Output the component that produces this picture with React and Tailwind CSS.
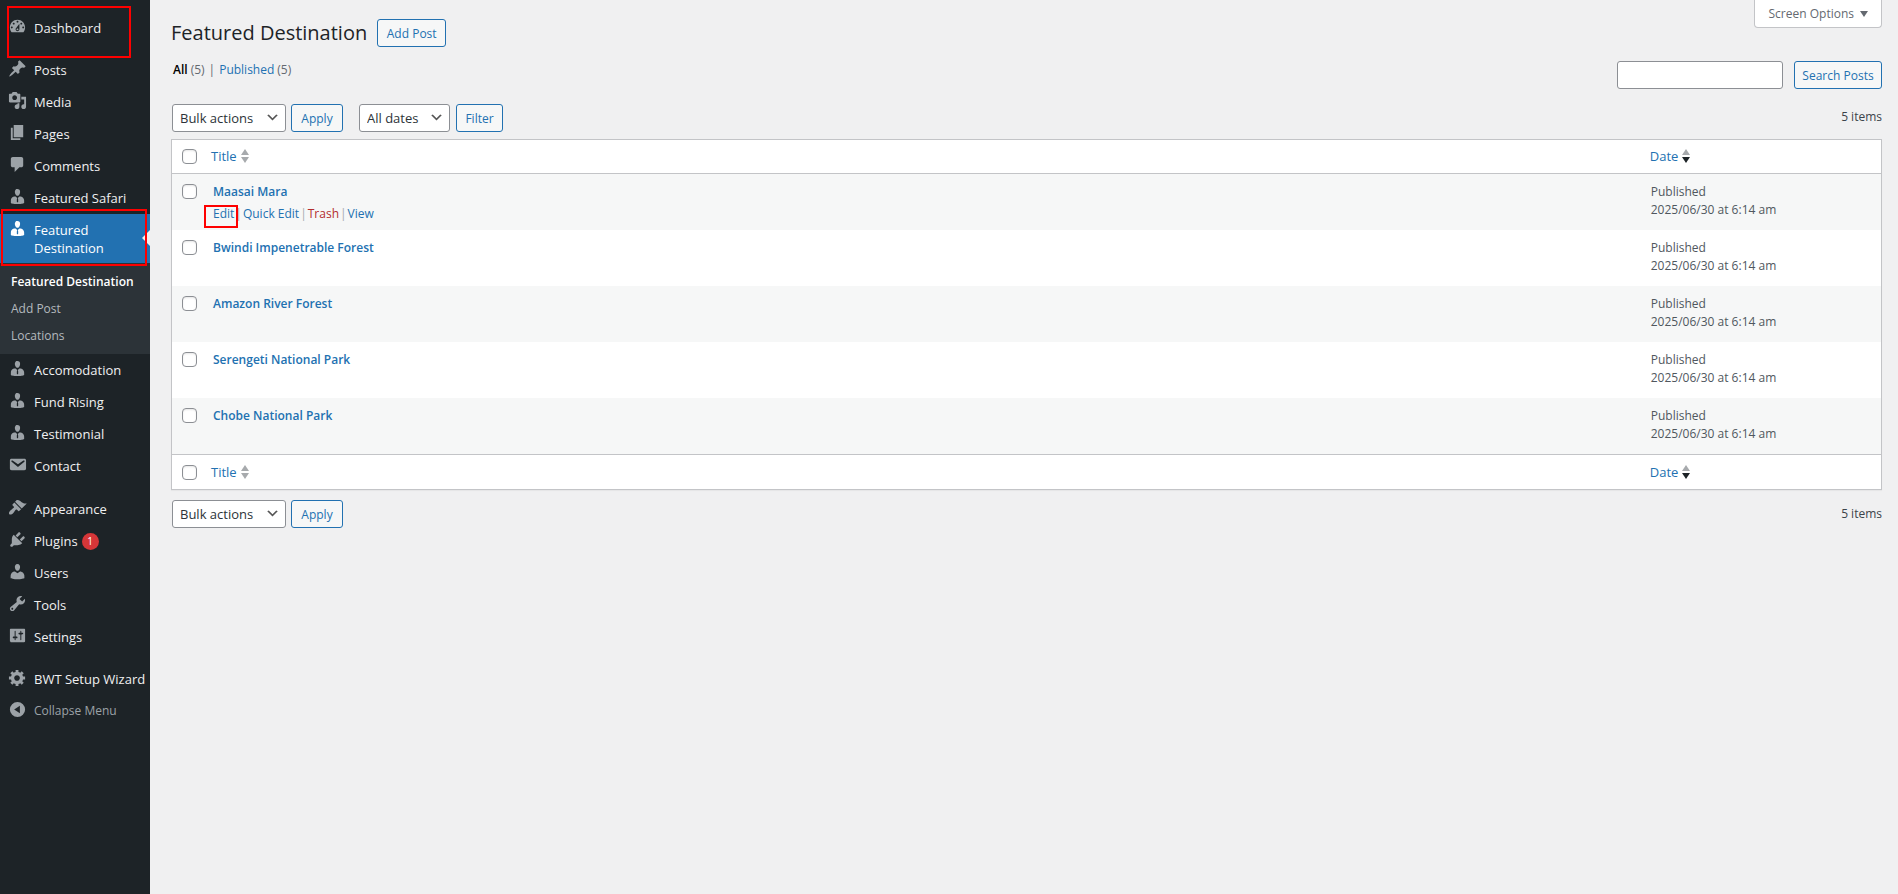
import React from "react";

const ICONS = {
  dashboard:
    "M3.76 16h12.48c1.1-1.37 1.76-3.11 1.76-5 0-4.42-3.58-8-8-8s-8 3.58-8 8c0 1.89.66 3.63 1.76 5zM10 4c.55 0 1 .45 1 1s-.45 1-1 1-1-.45-1-1 .45-1 1-1zM6 6c.55 0 1 .45 1 1s-.45 1-1 1-1-.45-1-1 .45-1 1-1zm8 0c.55 0 1 .45 1 1s-.45 1-1 1-1-.45-1-1 .45-1 1-1zm-5.37 5.55L12 7v6c0 1.1-.9 2-2 2s-2-.9-2-2c0-.57.24-1.08.63-1.45zM4 10c.55 0 1 .45 1 1s-.45 1-1 1-1-.45-1-1 .45-1 1-1zm12 0c.55 0 1 .45 1 1s-.45 1-1 1-1-.45-1-1 .45-1 1-1zm-5 3c0-.55-.45-1-1-1s-1 .45-1 1 .45 1 1 1 1-.45 1-1z",
  pin: "M10.44 3.02l1.82-1.82 6.36 6.35-1.83 1.82c-1.05-.68-2.48-.57-3.41.36l-.75.75c-.92.93-1.04 2.35-.35 3.41l-1.83 1.82-2.41-2.41-2.8 2.79c-.42.42-3.38 2.71-3.8 2.29s1.86-3.39 2.28-3.81l2.79-2.79L4.1 9.36l1.83-1.82c1.05.69 2.48.57 3.4-.36l.75-.75c.93-.92 1.05-2.35.36-3.41z",
  media:
    "M13 11V4c0-.55-.45-1-1-1h-1.67L9 1H5L3.67 3H2c-.55 0-1 .45-1 1v7c0 .55.45 1 1 1h10c.55 0 1-.45 1-1zM7 4.5c1.38 0 2.5 1.12 2.5 2.5S8.38 9.5 7 9.5 4.5 8.38 4.5 7 5.62 4.5 7 4.5zM14 6h5v10.5c0 1.38-1.12 2.5-2.5 2.5S14 17.88 14 16.5s1.12-2.5 2.5-2.5c.17 0 .34.02.5.05V9h-3V6zm-4 8.05V13h2v3.5c0 1.38-1.12 2.5-2.5 2.5S7 17.88 7 16.5 8.12 14 9.5 14c.17 0 .34.02.5.05z",
  pages: "M6 15V2h10v13H6zm-1 1h8v2H3V5h2v11z",
  comments:
    "M5 2h9c1.1 0 2 .9 2 2v7c0 1.1-.9 2-2 2h-2l-5 5v-5H5c-1.1 0-2-.9-2-2V4c0-1.1.9-2 2-2z",
  person:
    "M7.3 6l-.03-.19c-.04-.37-.05-.73-.03-1.08.02-.36.1-.71.25-1.04.14-.32.31-.61.52-.86s.49-.46.83-.6c.34-.15.72-.23 1.13-.23.69 0 1.26.2 1.71.59s.76.87.91 1.44.18 1.16.09 1.78l-.03.19c-.01.09-.05.25-.11.48-.05.24-.12.47-.2.69-.08.21-.19.45-.34.72-.14.27-.3.49-.47.69-.18.19-.4.34-.67.48-.27.13-.55.19-.86.19s-.59-.06-.87-.19c-.26-.13-.49-.29-.67-.5-.18-.2-.34-.42-.49-.66-.15-.25-.26-.49-.34-.73-.09-.25-.16-.47-.21-.67-.06-.21-.1-.37-.12-.5zm9.2 6.24c.41.7.5 1.41.5 2.14v2.49c0 .03-.12.08-.29.13-.18.04-.42.13-.97.27-.55.12-1.1.24-1.65.34s-1.19.19-1.95.27c-.75.08-1.46.12-2.13.12-.68 0-1.39-.04-2.14-.12-.75-.07-1.4-.17-1.98-.27-.58-.11-1.08-.23-1.56-.34-.49-.11-.8-.21-1.06-.29L3 16.87v-2.49c0-.75.07-1.46.46-2.15s.81-1.25 1.5-1.68C5.66 10.12 7.19 10 8 10l1.67 1.67L9.3 13.2v2.2l.72.9.68-.9v-2.2l-.38-1.53L11.97 10c.77 0 2.2.07 2.9.52.71.45 1.21 1.02 1.63 1.72z",
  email:
    "M3.87 4h13.25C18.37 4 19 4.59 19 5.79v8.42c0 1.19-.63 1.79-1.88 1.79H3.87c-1.25 0-1.88-.6-1.88-1.79V5.79c0-1.2.63-1.79 1.88-1.79zm6.62 8.6l6.74-5.53c.24-.2.43-.66.13-1.07-.29-.41-.82-.42-1.17-.17l-5.7 3.86L4.8 5.83c-.35-.25-.88-.24-1.17.17-.3.41-.11.87.13 1.07z",
  brush:
    "M14.48 11.06L7.41 3.99l1.5-1.5c.5-.56 2.3-.47 3.51.32 1.21.8 1.43 1.28 2.91 2.1 1.18.64 2.45 1.26 4.45.85zm-.71.71L6.7 4.7 4.93 6.47c-.39.39-.39 1.02 0 1.41l1.06 1.06c.39.39.39 1.03 0 1.42-.6.6-1.43 1.11-2.21 1.69-.35.26-.7.53-1.01.84C1.43 14.23.4 16.08 1.4 17.07c.99 1 2.84-.03 4.18-1.36.31-.31.58-.66.85-1.02.57-.78 1.08-1.61 1.69-2.21.39-.39 1.02-.39 1.41 0l1.06 1.06c.39.39 1.02.39 1.41 0z",
  plug: "M13.11 4.36L9.87 7.6 8 5.73l3.24-3.24c.35-.34 1.05-.2 1.56.32.52.51.66 1.21.31 1.55zm-8 1.77l.91-1.12 9.01 9.01-1.19.84c-.71.71-2.63 1.16-3.82 1.16H6.14L4.9 17.26c-.59.59-1.54.59-2.12 0-.59-.58-.59-1.53 0-2.12l1.24-1.24v-3.88c0-1.13.4-3.19 1.09-3.89zm7.26 3.97l3.24-3.24c.34-.35 1.04-.21 1.55.31.52.51.66 1.21.31 1.55l-3.24 3.25z",
  user: "M10 9.25c-2.27 0-2.73-3.44-2.73-3.44C7 4.02 7.82 2 9.97 2c2.16 0 2.98 2.02 2.71 3.81 0 0-.41 3.44-2.68 3.44zm0 2.57L12.72 10c2.39 0 4.52 2.33 4.52 4.53v2.49s-3.65 1.13-7.24 1.13c-3.65 0-7.24-1.13-7.24-1.13v-2.49c0-2.25 1.94-4.48 4.47-4.48z",
  wrench:
    "M16.68 9.77c-1.34 1.34-3.3 1.67-4.95.99l-5.41 6.52c-.99.99-2.59.99-3.58 0s-.99-2.59 0-3.57l6.52-5.42c-.68-1.65-.35-3.61.99-4.95 1.28-1.28 3.12-1.62 4.72-1.06l-2.89 2.89 2.82 2.82 2.86-2.87c.53 1.58.18 3.39-1.08 4.65zM3.81 16.21c.4.39 1.04.39 1.43 0 .4-.4.4-1.04 0-1.43-.39-.4-1.03-.4-1.43 0-.39.39-.39 1.03 0 1.43z",
  sliders:
    "M18 16V4c0-.55-.45-1-1-1H3c-.55 0-1 .45-1 1v12c0 .55.45 1 1 1h14c.55 0 1-.45 1-1zM8 11h1c.55 0 1 .45 1 1s-.45 1-1 1H8v1.5c0 .28-.22.5-.5.5s-.5-.22-.5-.5V13H6c-.55 0-1-.45-1-1s.45-1 1-1h1V5.5c0-.28.22-.5.5-.5s.5.22.5.5V11zm5-2h-1c-.55 0-1-.45-1-1s.45-1 1-1h1V5.5c0-.28.22-.5.5-.5s.5.22.5.5V7h1c.55 0 1 .45 1 1s-.45 1-1 1h-1v5.5c0 .28-.22.5-.5.5s-.5-.22-.5-.5V9z",
  gear: "M18 12h-2.18c-.17.7-.44 1.35-.81 1.93l1.54 1.54-2.1 2.1-1.54-1.54c-.58.36-1.23.63-1.91.79V19H8v-2.18c-.68-.16-1.33-.43-1.91-.79l-1.54 1.54-2.12-2.12 1.54-1.54c-.36-.58-.63-1.23-.79-1.91H1V9.03h2.17c.16-.7.44-1.35.8-1.94L2.43 5.55l2.1-2.1 1.54 1.54c.58-.37 1.24-.64 1.93-.81V2h3v2.18c.68.16 1.33.43 1.91.79l1.54-1.54 2.12 2.12-1.54 1.54c.36.59.64 1.24.8 1.94H18V12zm-8.5 1.5c1.66 0 3-1.34 3-3s-1.34-3-3-3-3 1.34-3 3 1.34 3 3 3z",
  collapse: "M10 2a8 8 0 1 0 0 16a8 8 0 1 0 0-16zM12.5 6v8L6.5 10z",
};

function Icon({ name }) {
  return (
    <span className="flex w-[34px] shrink-0 pt-[5px] pl-2">
      <svg viewBox="0 0 20 20" className="h-[19px] w-[19px] shrink-0 fill-current" aria-hidden="true">
        <path fillRule="evenodd" d={ICONS[name]} />
      </svg>
    </span>
  );
}

function MenuItem({ icon, label, badge }) {
  return (
    <li>
      <a href="#" className="flex h-8 items-start text-[#9ca2a7]">
        <Icon name={icon} />
        <span className="pt-[7px] text-[13px] leading-[18px] whitespace-nowrap text-[#f0f0f1]">{label}</span>
        {badge && (
          <span className="mt-2 ml-1 flex h-[17px] w-[17px] items-center justify-center rounded-full bg-[#d63638] text-[10px] text-white">
            {badge}
          </span>
        )}
      </a>
    </li>
  );
}

function Sidebar() {
  return (
    <nav aria-label="Main menu" className="w-[150px] shrink-0 bg-[#1d2327] pt-3">
      <ul className="relative">
        <MenuItem icon="dashboard" label="Dashboard" />
        <li aria-hidden="true" className="pointer-events-none absolute -top-1.5 left-[7px] h-[52px] w-[124px] border-2 border-[#fe0000]" />
      </ul>
      <ul className="mt-2.5">
        <MenuItem icon="pin" label="Posts" />
        <MenuItem icon="media" label="Media" />
        <MenuItem icon="pages" label="Pages" />
        <MenuItem icon="comments" label="Comments" />
        <MenuItem icon="person" label="Featured Safari" />
        <li>
          <div className="relative">
            <a href="#" aria-current="page" className="flex h-[49px] items-start bg-[#2271b1] text-white">
              <Icon name="person" />
              <span className="pt-[7px] text-[13px] leading-[18px]">
                Featured
                <br />
                Destination
              </span>
            </a>
            <svg viewBox="0 0 8 16" aria-hidden="true" className="absolute top-4 right-0 h-4 w-2 fill-[#f0f0f1]">
              <path d="M8 0v16L0 8z" />
            </svg>
            <div className="pointer-events-none absolute -top-[5px] right-[3px] -bottom-[3px] left-px border-2 border-[#fe0000]" />
          </div>
          <ul className="flex flex-col gap-px bg-[#2c3338] pt-1.5 pb-[5px] text-[12px] leading-[26px] text-[#b4b9be]">
            <li>
              <a href="#" className="block pl-[11px] font-semibold whitespace-nowrap text-white">Featured Destination</a>
            </li>
            <li>
              <a href="#" className="block pl-[11px]">Add Post</a>
            </li>
            <li>
              <a href="#" className="block pl-[11px]">Locations</a>
            </li>
          </ul>
        </li>
        <MenuItem icon="person" label="Accomodation" />
        <MenuItem icon="person" label="Fund Rising" />
        <MenuItem icon="person" label="Testimonial" />
        <MenuItem icon="email" label="Contact" />
      </ul>
      <ul className="mt-[11px]">
        <MenuItem icon="brush" label="Appearance" />
        <MenuItem icon="plug" label="Plugins" badge="1" />
        <MenuItem icon="user" label="Users" />
        <MenuItem icon="wrench" label="Tools" />
        <MenuItem icon="sliders" label="Settings" />
      </ul>
      <ul className="mt-2.5">
        <MenuItem icon="gear" label="BWT Setup Wizard" />
        <li>
          <button type="button" className="flex h-8 w-full items-start text-left text-[#9ca2a7]">
            <Icon name="collapse" />
            <span className="pt-[7px] text-[12px] leading-[18px]">Collapse Menu</span>
          </button>
        </li>
      </ul>
    </nav>
  );
}

function Button({ children, className = "" }) {
  return (
    <button
      type="button"
      className={`h-7 rounded-[3px] border border-[#2271b1] bg-[#f6f7f7] pt-0.5 text-[12px] text-[#2271b1] ${className}`}
    >
      {children}
    </button>
  );
}

function Select({ id, label, option, className }) {
  return (
    <div className={`relative ${className}`}>
      <select
        id={id}
        aria-label={label}
        className="h-7 w-full appearance-none rounded-[3px] border border-[#8c8f94] bg-white pr-6 pl-[7px] text-[13px] leading-[18px] text-[#2c3338]"
      >
        <option>{option}</option>
      </select>
      <svg viewBox="0 0 20 20" aria-hidden="true" className="pointer-events-none absolute top-1.5 right-1.5 h-[15px] w-[15px] fill-[#555555]">
        <path d="M5 6l5 5 5-5 2 1-7 7-7-7 2-1z" />
      </svg>
    </div>
  );
}

function BulkActions({ id }) {
  return (
    <div className="flex gap-[5px]">
      <Select id={id} label="Select bulk action" option="Bulk actions" className="w-[114px]" />
      <Button className="w-[52px]">Apply</Button>
    </div>
  );
}

function SortHeader({ label, sorted }) {
  return (
    <a href="#" className="flex items-center gap-1 text-[13px] leading-[18px] text-[#2271b1]">
      {label}
      <svg viewBox="0 0 8 14" aria-hidden="true" className="h-3.5 w-2">
        <path d="M4 0l4 6H0z" fill="#a7aaad" />
        <path d="M0 8h8l-4 6z" fill={sorted ? "#1d2327" : "#a7aaad"} />
      </svg>
    </a>
  );
}

function Check({ label }) {
  return (
    <input
      type="checkbox"
      aria-label={label}
      className="block h-[15px] w-[15px] appearance-none rounded-[4px] border border-[#8c8f94] bg-white shadow-[inset_0_1px_2px_rgba(0,0,0,0.1)]"
    />
  );
}

function HeaderCells() {
  return (
    <>
      <td className="w-[31px] pl-2.5">
        <Check label="Select all" />
      </td>
      <th scope="col" className="pl-2 text-left font-normal">
        <SortHeader label="Title" />
      </th>
      <th scope="col" className="w-[14%] pl-2 text-left font-normal">
        <SortHeader label="Date" sorted />
      </th>
    </>
  );
}

const POSTS = [
  { title: "Maasai Mara", actions: true },
  { title: "Bwindi Impenetrable Forest" },
  { title: "Amazon River Forest" },
  { title: "Serengeti National Park" },
  { title: "Chobe National Park" },
];

function RowActions() {
  return (
    <div className="mt-1 flex gap-px text-[12px] leading-[18px] whitespace-nowrap text-[#a7aaad]">
      <span className="relative">
        <a href="#" className="text-[#2271b1]">Edit</a>
        <span aria-hidden="true" className="pointer-events-none absolute top-0 -right-1 -bottom-[5px] -left-[9px] border-2 border-[#fe0000]" />
      </span>
      |
      <button type="button" className="text-[#2271b1]">Quick Edit</button>
      |
      <a href="#" className="text-[#b32d2e]">Trash</a>
      |
      <a href="#" className="text-[#2271b1]">View</a>
    </div>
  );
}

function PostsTable() {
  return (
    <table className="w-full table-fixed border-separate border-spacing-0 border border-[#c3c4c7] bg-white shadow-[0_1px_1px_rgba(0,0,0,0.04)]">
      <thead>
        <tr className="h-[34px] [&>*]:border-b [&>*]:border-[#c3c4c7] [&>th]:pb-0.5">
          <HeaderCells />
        </tr>
      </thead>
      <tbody>
        {POSTS.map((post) => (
          <tr key={post.title} className="h-14 align-top odd:bg-[#f6f7f7]">
            <td className="pt-2.5 pl-2.5">
              <Check label={`Select ${post.title}`} />
            </td>
            <td className="pt-[9px] pl-2.5">
              <a href="#" className="block text-[12px] leading-[18px] font-semibold text-[#2271b1]">{post.title}</a>
              {post.actions && <RowActions />}
            </td>
            <td className="pt-[9px] pl-[9px] text-[12px] leading-[18px] text-[#50575e]">
              Published
              <br />
              2025/06/30 at 6:14 am
            </td>
          </tr>
        ))}
      </tbody>
      <tfoot>
        <tr className="h-[35px] [&>*]:border-t [&>*]:border-[#c3c4c7]">
          <HeaderCells />
        </tr>
      </tfoot>
    </table>
  );
}

export default function App() {
  return (
    <div className="flex min-h-screen bg-[#f0f0f1] font-['Open_Sans','Noto_Sans',sans-serif] text-[#3c434a]">
      <Sidebar />
      <main className="min-w-0 flex-1 pr-4 pl-[21px]">
        <header className="flex items-start justify-between">
          <div className="flex items-center gap-2.5 pt-[19px]">
            <h1 className="text-[20px] leading-7 text-[#1d2327]">Featured Destination</h1>
            <Button className="w-[69px]">Add Post</Button>
          </div>
          <button
            type="button"
            className="flex h-7 items-center gap-1.5 rounded-b-[4px] border border-t-0 border-[#c3c4c7] bg-white pr-[13px] pl-3.5 text-[12px] text-[#646970]"
          >
            Screen Options
            <svg viewBox="0 0 8 6" aria-hidden="true" className="h-1.5 w-2 fill-current">
              <path d="M0 0h8L4 6z" />
            </svg>
          </button>
        </header>

        <div className="flex items-start justify-between pt-3.5">
          <ul className="flex gap-1 pl-0.5 text-[12px] leading-[18px] text-[#646970]">
            <li className="flex gap-[3px]">
              <a href="#" aria-current="page" className="font-semibold text-black">All</a> (5)
            </li>
            <li aria-hidden="true">|</li>
            <li className="flex gap-[3px]">
              <a href="#" className="text-[#2271b1]">Published</a> (5)
            </li>
          </ul>
          <form role="search" className="flex gap-[11px]">
            <input
              id="post-search"
              type="search"
              aria-label="Search Posts"
              className="h-7 w-[166px] rounded-[3px] border border-[#8c8f94] bg-white px-2 text-[13px]"
            />
            <Button className="w-[88px]">Search Posts</Button>
          </form>
        </div>

        <div className="flex items-start justify-between pt-[15px] pl-px">
          <div className="flex gap-4">
            <BulkActions id="bulk-top" />
            <div className="flex gap-1.5">
              <Select id="date-filter" label="Filter by date" option="All dates" className="w-[91px]" />
              <Button className="w-[47px]">Filter</Button>
            </div>
          </div>
          <span className="pt-1 text-[12px] leading-[18px]">5 items</span>
        </div>

        <div className="pt-[7px]">
          <PostsTable />
        </div>

        <div className="flex items-start justify-between pt-2.5 pl-px">
          <BulkActions id="bulk-bottom" />
          <span className="pt-[5px] text-[12px] leading-[18px]">5 items</span>
        </div>
      </main>
    </div>
  );
}
